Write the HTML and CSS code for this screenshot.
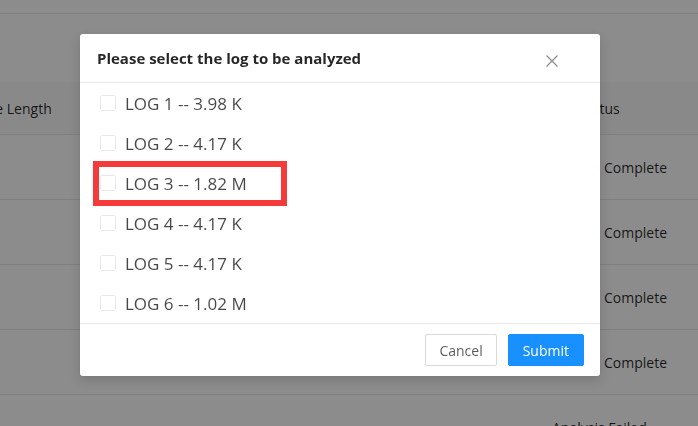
FILE: index.html
```html
<!DOCTYPE html>
<html lang="en">
<head>
<meta charset="utf-8">
<title>Log analysis</title>
<link rel="stylesheet" href="styles.css">
</head>
<body>
<div class="page">
  <div class="topbar"></div>
  <div class="spacer"></div>
  <div class="table">
    <div class="row head">
      <div class="cell c1">File Length</div>
      <div class="cell c2"></div>
      <div class="cell c3">Log Status</div>
    </div>
    <div class="row"><div class="cell c1"></div><div class="cell c2"></div><div class="cell c3 done">Complete</div></div>
    <div class="row"><div class="cell c1"></div><div class="cell c2"></div><div class="cell c3 done">Complete</div></div>
    <div class="row"><div class="cell c1"></div><div class="cell c2"></div><div class="cell c3 done">Complete</div></div>
    <div class="row"><div class="cell c1"></div><div class="cell c2"></div><div class="cell c3 done">Complete</div></div>
    <div class="row"><div class="cell c1"></div><div class="cell c2"></div><div class="cell c3 fail">Analysis Failed</div></div>
  </div>
</div>

<div class="mask"></div>

<div class="modal">
  <div class="modal-header">
    <div class="modal-title">Please select the log to be analyzed</div>
    <button class="close" aria-label="Close">
      <svg width="12" height="12" viewBox="0 0 12 12"><path d="M0.5 0.5 L11.5 11.5 M11.5 0.5 L0.5 11.5" stroke="#8c8c8c" stroke-width="1.2" fill="none"/></svg>
    </button>
  </div>
  <div class="modal-body">
    <label class="opt"><span class="box"></span><span class="lbl">LOG 1 -- 3.98 K</span></label>
    <label class="opt"><span class="box"></span><span class="lbl">LOG 2 -- 4.17 K</span></label>
    <label class="opt"><span class="box"></span><span class="lbl">LOG 3 -- 1.82 M</span></label>
    <label class="opt"><span class="box"></span><span class="lbl">LOG 4 -- 4.17 K</span></label>
    <label class="opt"><span class="box"></span><span class="lbl">LOG 5 -- 4.17 K</span></label>
    <label class="opt"><span class="box"></span><span class="lbl">LOG 6 -- 1.02 M</span></label>
  </div>
  <div class="modal-footer">
    <button class="btn">Cancel</button>
    <button class="btn primary">Submit</button>
  </div>
</div>

<div class="highlight"></div>
</body>
</html>
```
FILE: styles.css
```css
* { box-sizing: border-box; }
html, body { margin: 0; padding: 0; }
body {
  width: 698px;
  height: 426px;
  overflow: hidden;
  background: #fff;
  font-family: "Open Sans", "Noto Sans", sans-serif;
  color: rgba(0,0,0,0.85);
  font-size: 14px;
}
.page { width: 698px; }
.topbar { height: 14px; border-bottom: 1px solid #e8e8e8; }
.spacer { height: 68px; }
.table { margin-left: -35px; width: 733px; }
.row { display: flex; height: 65px; border-bottom: 1px solid #e8e8e8; align-items: center; }
.row.head { height: 53px; background: #fafafa; font-weight: 500; }
.cell { padding: 0 16px; white-space: nowrap; }
.c1 { width: 193px; }
.c2 { width: 378px; }
.c3 { flex: 1; }
.c3.done { padding-left: 68px; }

.mask {
  position: fixed;
  inset: 0;
  background: rgba(0,0,0,0.45);
}

.modal {
  position: absolute;
  left: 80px;
  top: 34px;
  width: 520px;
  background: #fff;
  border-radius: 3px;
  box-shadow: 0 4px 12px rgba(0,0,0,0.15);
}
.modal-header {
  height: 49px;
  display: flex;
  align-items: center;
  justify-content: space-between;
  padding: 0 42px 0 17px;
  border-bottom: 1px solid #e8e8e8;
}
.modal-title {
  font-size: 15px;
  font-weight: 700;
  color: rgba(0,0,0,0.85);
}
.close {
  border: 0;
  background: none;
  padding: 0;
  width: 12px;
  height: 12px;
  display: flex;
  margin-top: 6px;
}
.modal-body { display: flex; flex-direction: column; }
.opt {
  height: 40px;
  display: flex;
  align-items: center;
  padding-left: 20px;
  gap: 9px;
}
.box {
  width: 16px;
  height: 16px;
  border: 1px solid #d9d9d9;
  border-radius: 2px;
  background: #fff;
  opacity: 0.6;
}
.lbl {
  font-size: 17px;
  font-weight: 400;
  color: rgba(0,0,0,0.72);
}
.modal-footer {
  border-top: 1px solid #e8e8e8;
  height: 53px;
  display: flex;
  justify-content: flex-end;
  align-items: center;
  gap: 11px;
  padding: 0 16px;
}
.btn {
  height: 32px;
  padding: 0 13px;
  font-family: inherit;
  font-size: 14px;
  border: 1px solid #d9d9d9;
  border-radius: 2px;
  background: #fff;
  color: rgba(0,0,0,0.65);
}
.btn.primary {
  padding: 0 14px;
  background: #1890ff;
  border-color: #1890ff;
  color: #fff;
}
.highlight {
  position: absolute;
  left: 93px;
  top: 161px;
  width: 194px;
  height: 45px;
  border: 6px solid #f53a3a;
}
```
